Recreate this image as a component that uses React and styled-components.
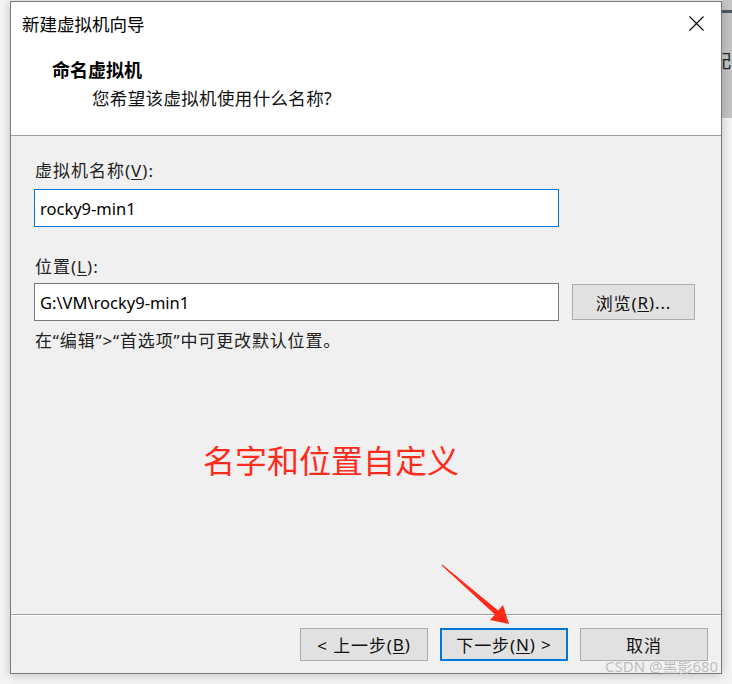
import React from "react";
import styled, { createGlobalStyle } from "styled-components";

const GlobalStyle = createGlobalStyle`
  html, body { margin: 0; padding: 0; }
  body {
    background: #f4f4f4;
    font-family: "Noto Sans", "Noto Sans CJK SC", sans-serif;
    color: #1a1a1a;
  }
`;

const Page = styled.div`
  width: 732px;
  height: 684px;
  display: flex;
  align-items: flex-start;
  padding-left: 10px;
  box-sizing: border-box;
  overflow: hidden;
  background: #f4f4f4;
`;

const Backdrop = styled.div`
  flex: 1;
  align-self: stretch;
  display: flex;
  flex-direction: column;
  overflow: hidden;
`;

const BackdropTop = styled.div`
  height: 118px;
  background: linear-gradient(#c9c9c9 0 10px, #4f5963 10px 13px, #c4c4c4 13px);
  overflow: hidden;
`;

const BackdropText = styled.div`
  margin: 49px 0 0 -9px;
  font-family: "Noto Sans CJK SC", sans-serif;
  font-size: 18px;
  line-height: 22px;
  color: #222;
  white-space: nowrap;
`;

const Window = styled.div`
  position: relative;
  flex-shrink: 0;
  margin-top: 1px;
  width: 712px;
  height: 673px;
  box-sizing: border-box;
  border: 1px solid #7a7a7a;
  background: #f0f0f0;
  display: flex;
  flex-direction: column;
  box-shadow: 0 1px 10px rgba(0, 0, 0, 0.22);
`;

const Header = styled.div`
  height: 133px;
  background: #fff;
  border-bottom: 1px solid #a0a0a0;
  display: flex;
  flex-direction: column;
`;

const TitleRow = styled.div`
  height: 42px;
  display: flex;
  align-items: center;
  justify-content: space-between;
  padding: 0 17px 0 11px;
`;

const TitleText = styled.div`
  font-family: "Noto Sans CJK SC", sans-serif;
  font-size: 17.5px;
  color: #000;
`;

const CloseIcon = styled.svg`
  width: 15px;
  height: 15px;
  display: block;
`;

const HeaderTitle = styled.div`
  margin: 13px 0 0 41px;
  font-family: "Noto Sans CJK SC", sans-serif;
  font-weight: 700;
  font-size: 18px;
  line-height: 24px;
  color: #000;
`;

const HeaderSub = styled.div`
  margin: 5px 0 0 81px;
  font-family: "Noto Sans", "Noto Sans CJK SC", sans-serif;
  font-size: 17.5px;
  letter-spacing: 0.35px;
  line-height: 24px;
  color: #111;
`;

const Body = styled.div`
  flex: 1;
  display: flex;
  flex-direction: column;
  padding: 24px 0 0 23px;
`;

const Label = styled.div`
  margin: ${(p) => p.$top || 0}px 0 0 1px;
  font-size: 17px;
  letter-spacing: 1px;
  line-height: 22px;
  color: #222;
`;

const U = styled.span`
  text-decoration: underline;
  text-underline-offset: 2px;
`;

const Row = styled.div`
  display: flex;
  align-items: center;
  gap: 13px;
  margin-top: ${(p) => p.$top || 0}px;
`;

const TextInput = styled.input`
  width: 525px;
  height: 38px;
  box-sizing: border-box;
  border: 1px solid ${(p) => (p.$focused ? "#0078d7" : "#7a7a7a")};
  background: #fff;
  padding: 0 5px;
  font-family: "Noto Sans", sans-serif;
  font-size: 16.5px;
  color: #000;
  outline: none;
  margin: 0;
`;

const Button = styled.button`
  width: ${(p) => p.$w || 128}px;
  height: ${(p) => p.$h || 33}px;
  box-sizing: border-box;
  margin: 0;
  padding: 0;
  background: #e1e1e1;
  border: ${(p) => (p.$primary ? "2px solid #0078d7" : "1px solid #adadad")};
  font-family: "Noto Sans", "Noto Sans CJK SC", sans-serif;
  font-size: 17px;
  letter-spacing: 0.9px;
  color: #111;
  display: flex;
  align-items: center;
  justify-content: center;
`;

const Hint = styled.div`
  margin: 9px 0 0 1px;
  font-size: 17px;
  letter-spacing: 0.85px;
  line-height: 22px;
  color: #222;
`;

const Annotation = styled.div`
  margin: 87px 0 0 169px;
  font-family: "Noto Sans CJK SC", sans-serif;
  font-size: 32px;
  line-height: 40px;
  color: #ff2b1c;
`;

const Footer = styled.div`
  height: 45px;
  border-top: 1px solid #a0a0a0;
  box-shadow: inset 0 1px 0 #ffffff;
  display: flex;
  justify-content: flex-end;
  align-items: flex-start;
  gap: 12px;
  padding: 13px 13px 0 0;
`;

const Arrow = styled.svg`
  position: absolute;
  left: 430px;
  top: 555px;
  width: 82px;
  height: 75px;
  pointer-events: none;
`;

const Watermark = styled.div`
  position: absolute;
  left: 594px;
  top: 656px;
  font-family: "Noto Sans", "Noto Sans CJK SC", sans-serif;
  font-size: 15px;
  line-height: 16px;
  color: rgba(175, 175, 175, 0.85);
  text-shadow: 0 0 1px rgba(255, 255, 255, 0.9);
  white-space: nowrap;
`;

export default function App() {
  return (
    <>
      <GlobalStyle />
      <Page>
        <Window>
          <Header>
            <TitleRow>
              <TitleText>新建虚拟机向导</TitleText>
              <CloseIcon viewBox="0 0 15 15">
                <path d="M0.5 0.5 L14.5 14.5 M14.5 0.5 L0.5 14.5" stroke="#000" strokeWidth="1.1" fill="none" />
              </CloseIcon>
            </TitleRow>
            <HeaderTitle>命名虚拟机</HeaderTitle>
            <HeaderSub>您希望该虚拟机使用什么名称?</HeaderSub>
          </Header>
          <Body>
            <Label>
              虚拟机名称(<U>V</U>):
            </Label>
            <Row $top={7}>
              <TextInput $focused defaultValue="rocky9-min1" />
            </Row>
            <Label $top={29}>
              位置(<U>L</U>):
            </Label>
            <Row $top={5}>
              <TextInput defaultValue="G:\VM\rocky9-min1" />
              <Button $w={123} $h={36}>
                浏览(<U>R</U>)...
              </Button>
            </Row>
            <Hint>在“编辑”&gt;“首选项”中可更改默认位置。</Hint>
            <Annotation>名字和位置自定义</Annotation>
          </Body>
          <Footer>
            <Button>
              &lt; 上一步(<U>B</U>)
            </Button>
            <Button $primary>
              下一步(<U>N</U>) &gt;
            </Button>
            <Button>取消</Button>
          </Footer>
          <Arrow viewBox="441 557 82 75">
            <polygon
              points="442.3,564.6 498.1,610.6 503,605 509,624 490,620 494.9,614.4 441.7,565.4"
              fill="#ff2a1a"
            />
          </Arrow>
          <Watermark>CSDN @黑影680</Watermark>
        </Window>
        <Backdrop>
          <BackdropTop>
            <BackdropText>配</BackdropText>
          </BackdropTop>
        </Backdrop>
      </Page>
    </>
  );
}
